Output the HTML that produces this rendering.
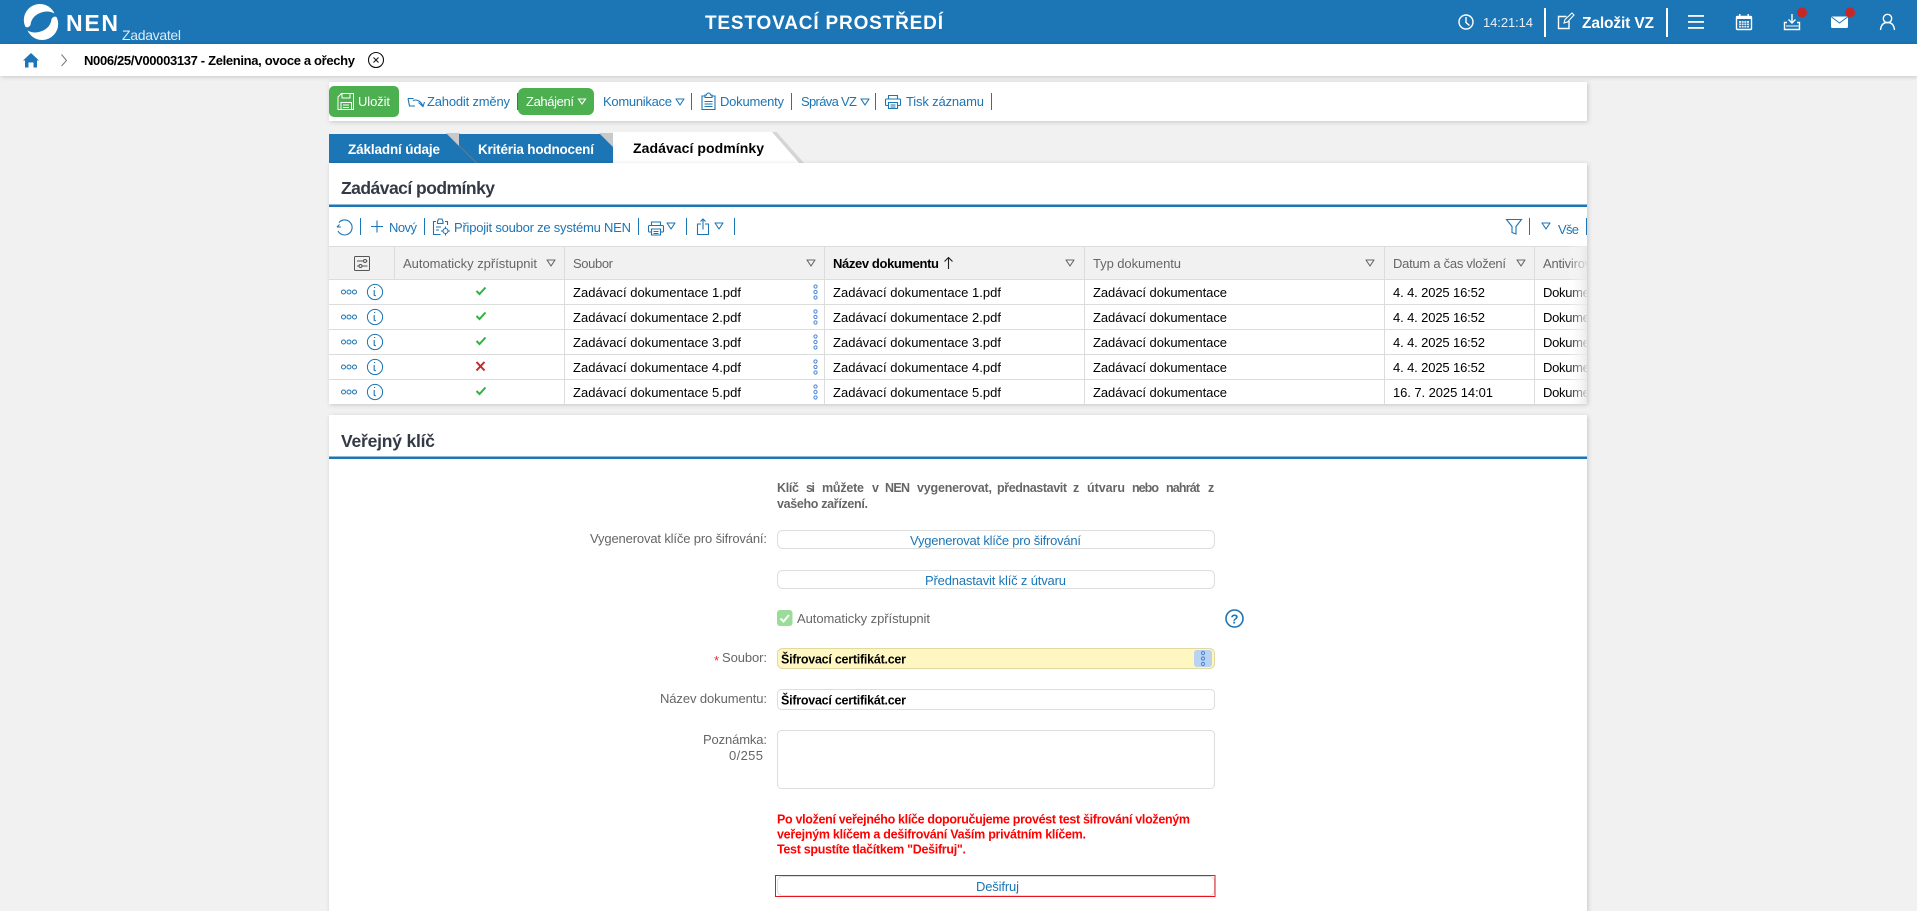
<!DOCTYPE html>
<html lang="cs"><head><meta charset="utf-8"><title>NEN</title>
<style>
html,body{margin:0;padding:0;background:#f1f1f1;width:1917px;height:911px;overflow:hidden}
svg{display:block;position:absolute;left:0;top:0}
text{font-family:"Liberation Sans",sans-serif;font-size:13px;white-space:pre}
.b{fill:#1c75b5}.g{fill:#666}.k{fill:#000}.w{fill:#fff}
.m{font-weight:bold}
.ic{fill:none;stroke:#1c75b5;stroke-width:1.1}
.iw{fill:none;stroke:#fff;stroke-width:1.4}
.it{fill:#666;font-size:12.5px;font-weight:bold}
</style></head><body>
<svg width="1917" height="911" viewBox="0 0 1917 911" xmlns="http://www.w3.org/2000/svg">
<defs>
<filter id="s" x="-2%" y="-10%" width="104%" height="125%"><feDropShadow dx="1" dy="1" stdDeviation="2" flood-color="#000" flood-opacity=".18"/></filter>
<linearGradient id="f" x1="0" x2="1" y1="0" y2="0"><stop offset="0" stop-color="#fff" stop-opacity="0"/><stop offset="1" stop-color="#e8e8e8" stop-opacity=".9"/></linearGradient>
<clipPath id="cl"><rect x="329" y="240" width="1258" height="170"/></clipPath>
<g id="tri"><path d="M-4 -3H4L0 3Z" fill="none" stroke="#1c75b5" stroke-width="1.1" stroke-linejoin="round"/></g>
<g id="trig"><path d="M-4 -3H4L0 3Z" fill="none" stroke="#666" stroke-width="1.1" stroke-linejoin="round"/></g>
<g id="rowic">
<g fill="none" stroke="#1c75b5" stroke-width="1"><circle cx="343.5" cy="0" r="2"/><circle cx="349" cy="0" r="2"/><circle cx="354.5" cy="0" r="2"/><circle cx="375" cy="0" r="7.6"/></g>
<path d="M374 -4.5h1.2M374.2 -2v5.2l1.6 .6" fill="none" stroke="#1c75b5" stroke-width="1.1"/>
</g>
<g id="keb"><g fill="none" stroke="#4a86d8" stroke-width="1"><circle cx="0" cy="-5.5" r="1.6"/><circle cx="0" cy="0" r="1.6"/><circle cx="0" cy="5.5" r="1.6"/></g></g>
<g id="chk"><path d="M-4.5 0L-1.5 3L4.5 -3.5" fill="none" stroke="#2fb33f" stroke-width="2"/></g>
<g id="prn" fill="none" stroke="#1c75b5" stroke-width="1.1"><path d="M3.500 5V1.500h9V5"/><path d="M3.500 11.500H1.500a1 1 0 0 1-1-1V6a1 1 0 0 1 1-1h13a1 1 0 0 1 1 1v4.500a1 1 0 0 1-1 1h-2"/><path d="M3.500 8.500h9v6h-9z"/><path d="M5.500 11h5M5.500 13h5"/></g>
<path id="lg" d="M25.200 26.500A16 16 0 0 1 54.500 13.500C50 11 45 11 40 13C34.500 15 31 19.500 30.500 25C29 27.500 26.500 28 25.200 26.500Z" fill="#fff"/>
</defs>

<rect width="1917" height="911" fill="#f1f1f1"/>

<!-- top header -->
<rect x="0" y="0" width="1917" height="44" fill="#1c75b4"/>
<use href="#lg"/>
<use href="#lg" transform="rotate(180 41 22)"/>
<text x="66" y="31" class="w m" style="font-size:23px" textLength="52" lengthAdjust="spacing">NEN</text>
<text x="122" y="40" style="font-size:14px;fill:#dcebf6" textLength="59">Zadavatel</text>
<text x="705" y="29" class="w m" style="font-size:19px" textLength="238">TESTOVACÍ PROSTŘEDÍ</text>

<g class="iw"><circle cx="1466" cy="22" r="7"/><path d="M1466 17v5.500l3.500 3"/></g>
<text x="1483" y="27" style="font-size:13px;fill:#e8f0f7" textLength="50">14:21:14</text>
<rect x="1544" y="8" width="2" height="29" fill="#fff"/>
<g class="iw"><path d="M1569 21v7.500h-10.500v-12h8"/><path d="M1564 23l1-3.500l7-6.500l2 2l-6.500 7z" stroke-width="1.100"/></g>
<text x="1582" y="28" class="w m" style="font-size:15.500px" textLength="72">Založit VZ</text>
<rect x="1666" y="8" width="2" height="29" fill="#fff"/>
<g fill="#fff"><rect x="1688" y="15" width="16" height="1.800"/><rect x="1688" y="21" width="16" height="1.800"/><rect x="1688" y="27" width="16" height="1.800"/></g>
<g class="iw"><rect x="1736.500" y="16.500" width="15" height="13" rx="1"/></g>
<rect x="1736" y="16" width="16" height="3" fill="#fff"/><rect x="1739" y="14" width="1.500" height="4" fill="#fff"/><rect x="1747.500" y="14" width="1.500" height="4" fill="#fff"/>
<g fill="#dfeaf3"><rect x="1739" y="21" width="10" height="6.500"/></g>
<path d="M1741.500 21v6.500M1744 21v6.500M1746.500 21v6.500M1739 23.200h10M1739 25.400h10" stroke="#1c75b4" stroke-width=".7"/>
<g class="iw"><path d="M1792 14v9M1788.500 19.500l3.500 3.500l3.500-3.500M1787 22.500h-2.500v7h15v-7H1797"/><path d="M1786 26h13" stroke-width="1"/></g>
<circle cx="1802" cy="12.500" r="5" fill="#c62828"/>
<rect x="1831" y="16.500" width="17" height="11.500" rx="1.500" fill="#fff"/>
<path d="M1831.500 17l8 6l8-6" fill="none" stroke="#1c75b4" stroke-width="1"/>
<circle cx="1850" cy="12.500" r="5" fill="#c62828"/>
<g class="iw"><circle cx="1887.500" cy="18.500" r="4.200"/><path d="M1880.500 30c.5-5 3-7.500 7-7.500s6.500 2.500 7 7.500"/></g>

<!-- sub bar -->
<rect x="0" y="44" width="1917" height="32" fill="#fff" filter="url(#s)"/>
<path d="M23 60.500L31 53L39 60.500H37V67.500H33.500V62.500H28.500V67.500H25V60.500Z" fill="#1c75b5"/>
<path d="M61.500 54.500L66.500 60.500L61.500 66" fill="none" stroke="#777" stroke-width="1"/>
<text x="84" y="65" class="k m" style="font-size:13px" textLength="271">N006/25/V00003137 - Zelenina, ovoce a ořechy</text>
<circle cx="376" cy="60" r="7.500" fill="none" stroke="#111" stroke-width="1.100"/>
<path d="M373.500 57.500l5 5M378.500 57.500l-5 5" stroke="#111" stroke-width="1"/>

<!-- action toolbar -->
<rect x="329" y="82" width="1258" height="39" fill="#fff" filter="url(#s)"/>
<rect x="329" y="86" width="70" height="31" rx="5" fill="#4caf50"/>
<g fill="none" stroke="#fff" stroke-width="1"><path d="M338 97l3.500-3.500h12v16h-15.500z"/><path d="M342 93.500v4.500h8v-4.500M341 109.500v-7h10.500v7M343 105h6M343 107.500h6"/></g>
<text x="358" y="106" class="w" style="font-size:13px" textLength="32">Uložit</text>
<g class="ic"><path d="M408 98.500h5.500M408 98.500l1.500 7.500h5.500M413 100.500c4-1.500 8 .5 10 6M418.500 102.500l4.500 4l1.500-4.500"/></g>
<text x="427" y="106" class="b" style="font-size:13px" textLength="83">Zahodit změny</text>
<rect x="517" y="93" width="1" height="17" fill="#1c75b5"/>
<rect x="518" y="88" width="76" height="27" rx="6" fill="#4caf50"/>
<text x="526" y="106" class="w" style="font-size:13px" textLength="48">Zahájení</text>
<path d="M578.500 99H585.500L582 104Z" fill="none" stroke="#fff" stroke-width="1.100"/>
<text x="603" y="106" class="b" style="font-size:13px" textLength="69">Komunikace</text>
<use href="#tri" x="680" y="102"/>
<rect x="691" y="93" width="1" height="17" fill="#1c75b5"/>
<g class="ic"><path d="M705 96h-3v13.500h13v-13.500h-3M705 97.500v-2.500h1.500a2 2 0 0 1 4 0h1.500v2.500z"/><path d="M704.500 101.500h8M704.500 104h8M704.500 106.500h8"/></g>
<text x="720" y="106" class="b" style="font-size:13px" textLength="64">Dokumenty</text>
<rect x="791" y="93" width="1" height="17" fill="#1c75b5"/>
<text x="801" y="106" class="b" style="font-size:13px" textLength="56">Správa VZ</text>
<use href="#tri" x="865" y="102"/>
<rect x="875" y="93" width="1" height="17" fill="#1c75b5"/>
<use href="#prn" x="885" y="94"/>
<text x="906" y="106" class="b" style="font-size:13px" textLength="78">Tisk záznamu</text>
<rect x="991" y="93" width="1" height="17" fill="#1c75b5"/>

<!-- tabs -->
<path d="M446 133H460V147Z" fill="#c9c9c9"/>
<path d="M599 133H614V148Z" fill="#c9c9c9"/>
<path d="M329 134H447L477 164H329Z" fill="#1c75b4"/>
<path d="M459 134H600L613 147V163H477L459 145Z" fill="#1c75b4"/>
<path d="M459 145.500L476.500 163" stroke="#56788f" stroke-width="1.400" fill="none"/>
<path d="M772 132H776.500L804 163H799Z" fill="#d5d5d5"/>
<path d="M613 132H772L799 163H613Z" fill="#fff"/>
<text x="348" y="154" class="w m" style="font-size:13.500px" textLength="92">Základní údaje</text>
<text x="478" y="154" class="w m" style="font-size:13.500px" textLength="116">Kritéria hodnocení</text>
<text x="633" y="153" class="k m" style="font-size:14px" textLength="131">Zadávací podmínky</text>

<!-- panel 1 -->
<rect x="329" y="163" width="1258" height="241" fill="#fff" filter="url(#s)"/>
<text x="341" y="194" class="m" style="font-size:17.500px;fill:#333a45" textLength="154">Zadávací podmínky</text>
<rect x="329" y="204.500" width="1258" height="2.500" fill="#1c75b4"/>

<!-- panel toolbar -->
<g class="ic"><path d="M339 222.500A7.500 7.500 0 1 1 338 231"/><path d="M337 227h4M337 227l2.500-2.500"/></g>
<rect x="360" y="218" width="1" height="17" fill="#1c75b5"/>
<path d="M377 220.500v12M371 226.500h12" stroke="#1c75b5" stroke-width="1.100"/>
<text x="389" y="232" class="b" style="font-size:13px" textLength="28">Nový</text>
<rect x="424" y="218" width="1" height="17" fill="#1c75b5"/>
<g class="ic"><path d="M436 221.500h-2.500v13h7M445 221.500h2.500v3.500M437.500 221.500l1-2.500h3.500l1 2.500v2h-5.500z"/><circle cx="445.500" cy="231" r="2.500"/><path d="M445.500 226.500v2M445.500 233.500v2M441 231h2M448 231h2M436 227h5M436 230h3"/></g>
<text x="454" y="232" class="b" style="font-size:13px" textLength="177">Připojit soubor ze systému NEN</text>
<rect x="638" y="218" width="1" height="17" fill="#1c75b5"/>
<use href="#prn" x="648" y="220.500"/>
<use href="#tri" x="671" y="226"/>
<rect x="686" y="218" width="1" height="17" fill="#1c75b5"/>
<g class="ic"><path d="M701 224h-3.500v10.500h11V224H705M703 229.500v-10.500M700.500 221.500l2.500-2.500l2.500 2.500"/></g>
<use href="#tri" x="719" y="226"/>
<rect x="734" y="218" width="1" height="17" fill="#1c75b5"/>
<path d="M1506.500 219.500H1521.500L1516 226.500V234L1512 232.500V226.500Z" fill="none" stroke="#1c75b5" stroke-width="1.100"/>
<rect x="1529" y="218" width="1" height="17" fill="#1c75b5"/>
<use href="#tri" x="1546" y="226"/>
<text x="1558" y="234" class="b" style="font-size:13px" textLength="21">Vše</text>
<rect x="1586" y="218" width="1" height="17" fill="#1c75b5"/>

<!-- table -->
<rect x="329" y="246" width="1258" height="33" fill="#f1f1f1"/>
<g fill="#dcdcdc">
<rect x="329" y="246" width="1258" height="1"/>
<rect x="329" y="279" width="1258" height="1"/>
<rect x="329" y="304" width="1258" height="1"/>
<rect x="329" y="329" width="1258" height="1"/>
<rect x="329" y="354" width="1258" height="1"/>
<rect x="329" y="379" width="1258" height="1"/>
<rect x="394" y="246" width="1" height="33"/>
<rect x="564" y="246" width="1" height="158"/>
<rect x="824" y="246" width="1" height="158"/>
<rect x="1084" y="246" width="1" height="158"/>
<rect x="1384" y="246" width="1" height="158"/>
<rect x="1534" y="246" width="1" height="158"/>
</g>
<g fill="none" stroke="#555" stroke-width="1"><rect x="354.500" y="256.500" width="15" height="14" rx="1"/><path d="M357 261h6.500M366 261h1.500M357 266h2M362 266h5.500"/><circle cx="365" cy="261" r="1.500"/><circle cx="360.500" cy="266" r="1.500"/></g>

<g class="g" clip-path="url(#cl)">
<text x="403" y="268" textLength="134">Automaticky zpřístupnit</text>
<text x="573" y="268" textLength="40">Soubor</text>
<text x="1093" y="268" textLength="88">Typ dokumentu</text>
<text x="1393" y="268" textLength="113">Datum a čas vložení</text>
<text x="1543" y="268" style="letter-spacing:-.2px">Antivirová kontrola</text>
</g>
<text x="833" y="268" class="k m" textLength="106">Název dokumentu</text>
<path d="M948.500 269v-11M944.500 261.500l4-4l4 4" fill="none" stroke="#222" stroke-width="1.100"/>
<use href="#trig" x="551" y="263"/><use href="#trig" x="811" y="263"/><use href="#trig" x="1070" y="263"/><use href="#trig" x="1370" y="263"/><use href="#trig" x="1521" y="263"/>

<use href="#rowic" y="292"/><use href="#rowic" y="317"/><use href="#rowic" y="342"/><use href="#rowic" y="367"/><use href="#rowic" y="392"/>
<use href="#chk" x="481" y="291"/><use href="#chk" x="481" y="316"/><use href="#chk" x="481" y="341"/>
<path d="M476.500 362l8 8.500M484.500 362l-8 8.500" stroke="#c62828" stroke-width="2"/>
<use href="#chk" x="481" y="391"/>
<use href="#keb" x="815.500" y="292"/><use href="#keb" x="815.500" y="317"/><use href="#keb" x="815.500" y="342"/><use href="#keb" x="815.500" y="367"/><use href="#keb" x="815.500" y="392"/>

<g class="k" clip-path="url(#cl)">
<text x="573" y="297" textLength="168">Zadávací dokumentace 1.pdf</text>
<text x="833" y="297" textLength="168">Zadávací dokumentace 1.pdf</text>
<text x="1093" y="297" textLength="134">Zadávací dokumentace</text>
<text x="1393" y="297" textLength="92">4. 4. 2025 16:52</text>
<text x="1543" y="297" style="letter-spacing:-.3px">Dokument</text>
<text x="573" y="322" textLength="168">Zadávací dokumentace 2.pdf</text>
<text x="833" y="322" textLength="168">Zadávací dokumentace 2.pdf</text>
<text x="1093" y="322" textLength="134">Zadávací dokumentace</text>
<text x="1393" y="322" textLength="92">4. 4. 2025 16:52</text>
<text x="1543" y="322" style="letter-spacing:-.3px">Dokument</text>
<text x="573" y="347" textLength="168">Zadávací dokumentace 3.pdf</text>
<text x="833" y="347" textLength="168">Zadávací dokumentace 3.pdf</text>
<text x="1093" y="347" textLength="134">Zadávací dokumentace</text>
<text x="1393" y="347" textLength="92">4. 4. 2025 16:52</text>
<text x="1543" y="347" style="letter-spacing:-.3px">Dokument</text>
<text x="573" y="372" textLength="168">Zadávací dokumentace 4.pdf</text>
<text x="833" y="372" textLength="168">Zadávací dokumentace 4.pdf</text>
<text x="1093" y="372" textLength="134">Zadávací dokumentace</text>
<text x="1393" y="372" textLength="92">4. 4. 2025 16:52</text>
<text x="1543" y="372" style="letter-spacing:-.3px">Dokument</text>
<text x="573" y="397" textLength="168">Zadávací dokumentace 5.pdf</text>
<text x="833" y="397" textLength="168">Zadávací dokumentace 5.pdf</text>
<text x="1093" y="397" textLength="134">Zadávací dokumentace</text>
<text x="1393" y="397" textLength="100">16. 7. 2025 14:01</text>
<text x="1543" y="397" style="letter-spacing:-.3px">Dokument</text>
</g>
<rect x="1567" y="246" width="20" height="158" fill="url(#f)"/>

<!-- panel 2 -->
<rect x="329" y="415" width="1258" height="500" fill="#fff" filter="url(#s)"/>
<text x="341" y="447" class="m" style="font-size:17.500px;fill:#333a45" textLength="94">Veřejný klíč</text>
<rect x="329" y="456.500" width="1258" height="2.500" fill="#1c75b4"/>

<text x="777" y="492" class="it" textLength="22">Klíč</text>
<text x="806" y="492" class="it" textLength="9">si</text>
<text x="822" y="492" class="it" textLength="42">můžete</text>
<text x="872" y="492" class="it" textLength="8">v</text>
<text x="885" y="492" class="it" textLength="25">NEN</text>
<text x="917" y="492" class="it" textLength="75">vygenerovat,</text>
<text x="997" y="492" class="it" textLength="70">přednastavit</text>
<text x="1073" y="492" class="it" textLength="7">z</text>
<text x="1087" y="492" class="it" textLength="38">útvaru</text>
<text x="1132" y="492" class="it" textLength="27">nebo</text>
<text x="1166" y="492" class="it" textLength="34">nahrát</text>
<text x="1208" y="492" class="it" textLength="7">z</text>
<text x="777" y="508" class="it" textLength="91">vašeho zařízení.</text>

<text x="590" y="543" class="g" textLength="177">Vygenerovat klíče pro šifrování:</text>
<rect x="777.500" y="530.500" width="437" height="18" rx="5" fill="#fff" stroke="#ddd"/>
<text x="910" y="545" class="b" textLength="171">Vygenerovat klíče pro šifrování</text>
<rect x="777.500" y="570.500" width="437" height="18" rx="5" fill="#fff" stroke="#ddd"/>
<text x="925" y="585" class="b" textLength="141">Přednastavit klíč z útvaru</text>

<rect x="777" y="610" width="15.500" height="16" rx="3" fill="#9bdc9b"/>
<path d="M780.500 618.500l3 3l5.500-6.500" fill="none" stroke="#fff" stroke-width="2"/>
<text x="797" y="623" class="g" textLength="133">Automaticky zpřístupnit</text>
<circle cx="1234.500" cy="618.500" r="8.500" fill="none" stroke="#1c75b5" stroke-width="1.600"/>
<text x="1230.500" y="623.500" class="b m" style="font-size:13px">?</text>

<text x="714" y="665" style="fill:#d33;font-size:13px">*</text>
<text x="722" y="662" class="g" textLength="45">Soubor:</text>
<rect x="777.500" y="648.500" width="437" height="20" rx="5" fill="#fff7c2" stroke="#e2d9a0"/>
<text x="781" y="663.500" class="k m" style="font-size:12.500px" textLength="125">Šifrovací certifikát.cer</text>
<rect x="1194" y="650" width="18" height="17" rx="3" fill="#b9d3f0"/>
<use href="#keb" x="1203" y="658.500"/>

<text x="660" y="703" class="g" textLength="107">Název dokumentu:</text>
<rect x="777.500" y="689.500" width="437" height="20" rx="4" fill="#fff" stroke="#ddd"/>
<text x="781" y="704.500" class="k m" style="font-size:12.500px" textLength="125">Šifrovací certifikát.cer</text>

<text x="703" y="744" class="g" textLength="64">Poznámka:</text>
<text x="729" y="760" class="g" textLength="34">0/255</text>
<rect x="777.500" y="730.500" width="437" height="58" rx="4" fill="#fff" stroke="#ddd"/>

<text x="777" y="823.500" class="m" style="fill:#f00;font-size:12.500px" textLength="413">Po vložení veřejného klíče doporučujeme provést test šifrování vloženým</text>
<text x="777" y="838.500" class="m" style="fill:#f00;font-size:12.500px" textLength="309">veřejným klíčem a dešifrování Vaším privátním klíčem.</text>
<text x="777" y="853.500" class="m" style="fill:#f00;font-size:12.500px" textLength="189">Test spustíte tlačítkem "Dešifruj".</text>

<rect x="777.500" y="876.500" width="437" height="19" rx="5" fill="#fff" stroke="#ddd"/>
<rect x="775.500" y="875.500" width="439.500" height="21" fill="none" stroke="#e8141c" stroke-width="1"/>
<text x="976" y="891" class="b" textLength="43">Dešifruj</text>
</svg>
</body></html>
